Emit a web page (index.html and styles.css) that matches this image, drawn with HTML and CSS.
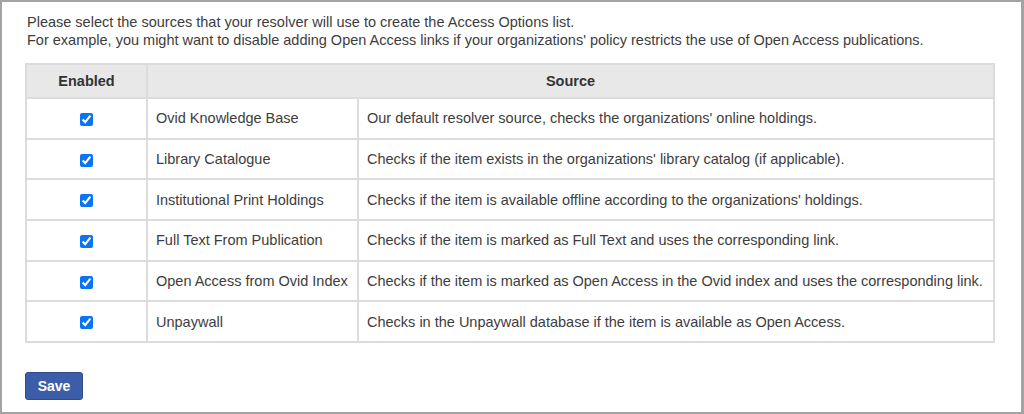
FILE: index.html
```html
<!DOCTYPE html>
<html>
<head>
<meta charset="utf-8">
<link rel="stylesheet" href="styles.css">
</head>
<body>
<div class="frame">
  <p class="intro">Please select the sources that your resolver will use to create the Access Options list.<br>For example, you might want to disable adding Open Access links if your organizations' policy restricts the use of Open Access publications.</p>
  <table class="sources">
    <thead>
      <tr><th class="col-en">Enabled</th><th colspan="2">Source</th></tr>
    </thead>
    <tbody>
      <tr><td class="cb"><input type="checkbox" checked></td><td class="name">Ovid Knowledge Base</td><td>Our default resolver source, checks the organizations' online holdings.</td></tr>
      <tr><td class="cb"><input type="checkbox" checked></td><td class="name">Library Catalogue</td><td>Checks if the item exists in the organizations' library catalog (if applicable).</td></tr>
      <tr><td class="cb"><input type="checkbox" checked></td><td class="name">Institutional Print Holdings</td><td>Checks if the item is available offline according to the organizations' holdings.</td></tr>
      <tr><td class="cb"><input type="checkbox" checked></td><td class="name">Full Text From Publication</td><td>Checks if the item is marked as Full Text and uses the corresponding link.</td></tr>
      <tr><td class="cb"><input type="checkbox" checked></td><td class="name">Open Access from Ovid Index</td><td>Checks if the item is marked as Open Access in the Ovid index and uses the corresponding link.</td></tr>
      <tr><td class="cb"><input type="checkbox" checked></td><td class="name">Unpaywall</td><td>Checks in the Unpaywall database if the item is available as Open Access.</td></tr>
    </tbody>
  </table>
  <button class="save">Save</button>
</div>
</body>
</html>
```
FILE: styles.css
```css
html, body {
  margin: 0;
  padding: 0;
  background: #fff;
}
.frame {
  box-sizing: border-box;
  width: 1024px;
  height: 414px;
  border: 2px solid #a3a3a3;
  border-right-width: 3px;
  padding: 11px 27px 0 23px;
  font-family: "Liberation Sans", Arial, sans-serif;
  font-size: 14.5px;
  color: #3d3d3d;
}
.intro {
  margin: 0 0 14px 2px;
  line-height: 18px;
}
.sources {
  width: 970px;
  border-collapse: collapse;
  border: 2px solid #dcdcdc;
}
.sources th, .sources td {
  border: 2px solid #dcdcdc;
  padding: 0 8px;
  text-align: left;
}
.sources th {
  background: #e8e8e8;
  height: 32px;
  font-weight: bold;
  text-align: center;
  color: #333;
}
.col-en { width: 103px; }
.sources td { height: 38.7px; }
.sources td.cb { text-align: center; padding: 0; }
.sources td.name { width: 193px; }
.cb input {
  margin: 0;
  width: 13px;
  height: 13px;
  vertical-align: middle;
  accent-color: #0b74f5;
}
.save {
  margin-top: 29px;
  width: 58px;
  height: 28px;
  background: #3c5ea8;
  border: 1px solid #2f4a89;
  border-radius: 3px;
  color: #fff;
  font-family: "Liberation Sans", Arial, sans-serif;
  font-size: 14px;
  font-weight: bold;
  padding: 0;
}
```
